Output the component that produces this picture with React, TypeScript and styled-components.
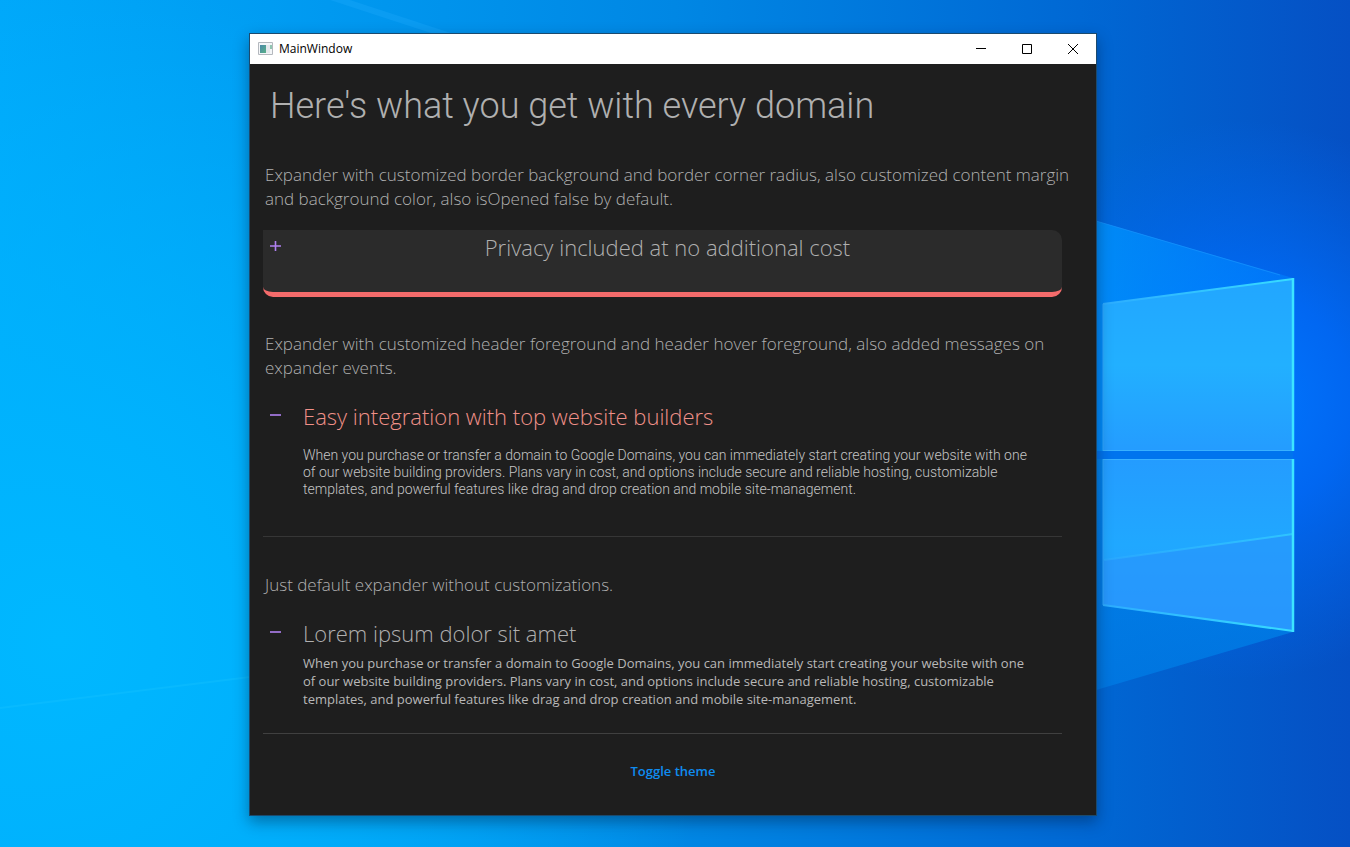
import React, { useId, useState } from "react";
import styled, { createGlobalStyle, css } from "styled-components";

const segoe = `"Open Sans", "Noto Sans", sans-serif`;
const roboto = `Roboto, "Liberation Sans", sans-serif`;

const GlobalStyle = createGlobalStyle`
  *, *::before, *::after { box-sizing: border-box; }
  html, body, #root { margin: 0; min-height: 100vh; }
  body { background: #0a84e8; font-family: ${segoe}; }
  button { font: inherit; color: inherit; background: none; border: 0; padding: 0; cursor: pointer; }
  h1, h2, p { margin: 0; font-weight: inherit; }
`;

const Desktop = styled.div`
  position: relative;
  display: flex;
  align-items: flex-start;
  min-height: 100vh;
  padding: 33px 253px 31px 249px;
  overflow: hidden;
`;

const WallpaperSvg = styled.svg`
  position: absolute;
  inset: 0;
  width: 100%;
  height: 100%;
`;

const AppWindow = styled.main<{ $light: boolean }>`
  position: relative;
  flex: 1;
  min-width: 0;
  display: flex;
  flex-direction: column;
  border: 1px solid #1b4a6e;
  box-shadow: 0 6px 14px rgba(0, 20, 50, 0.4);
  color: ${(p) => (p.$light ? "#444444" : "#b0b0b0")};
  background: ${(p) => (p.$light ? "#f4f4f4" : "#1e1e1e")};
`;

const TitleBar = styled.header`
  display: flex;
  align-items: center;
  height: 30px;
  padding-left: 8px;
  background: #ffffff;
  color: #000000;
`;

const AppIcon = styled.svg`
  width: 16px;
  height: 16px;
  margin-right: 5px;
`;

const WindowTitle = styled.span`
  flex: 1;
  font-size: 12px;
  line-height: 16px;
`;

const CaptionButton = styled.button`
  display: grid;
  place-items: center;
  width: 46px;
  height: 30px;
`;

const Content = styled.div`
  display: flex;
  flex-direction: column;
  padding: 18px 34px 0 13px;
`;

const Footer = styled.footer`
  display: flex;
  justify-content: center;
  padding: 27px 0 34px;
`;

const PageTitle = styled.h1`
  padding-left: 7px;
  font-family: ${roboto};
  font-size: 36px;
  font-weight: 300;
  line-height: 48px;
`;

const Section = styled.section<{ $gap: number }>`
  margin-top: ${(p) => p.$gap}px;
`;

const Description = styled.p`
  margin-right: -20px;
  padding-left: 2px;
  font-size: 17px;
  font-weight: 300;
  line-height: 24px;
`;

const Panel = styled.div<{ $variant: "card" | "roomy" | "plain" }>`
  margin-top: 19px;
  border-bottom: 1px solid #404040;
  ${(p) =>
    p.$variant === "roomy" &&
    css`
      border-bottom-color: #363636;
    `}
  ${(p) =>
    p.$variant === "card" &&
    css`
      padding-bottom: 28px;
      background: #2b2b2b;
      border-radius: 0 10px 10px 10px;
      border-bottom: 5px solid #f46b6b;
    `}
`;

const Header = styled.button<{ $accent: boolean; $centered: boolean }>`
  display: flex;
  align-items: flex-start;
  width: 100%;
  padding-right: ${(p) => (p.$centered ? 30 : 0)}px;
  font-size: 22px;
  font-weight: 300;
  line-height: 34px;
  text-align: ${(p) => (p.$centered ? "center" : "left")};
  color: ${(p) => (p.$accent ? "#f09088" : "inherit")};
`;

const ToggleMark = styled.svg`
  flex: none;
  width: 12px;
  height: 12px;
  margin: 10px 21px 0 7px;
`;

const HeaderText = styled.span`
  flex: 1;
`;

const Body = styled.p<{ $variant: "card" | "roomy" | "plain" }>`
  padding: 4px 24px 25px 40px;
  font-size: 13px;
  line-height: 18px;
  color: #b8b8b8;
  ${(p) =>
    p.$variant === "roomy" &&
    css`
      padding: 14px 24px 38px 40px;
      font-family: ${roboto};
      font-size: 14px;
      font-weight: 300;
      line-height: 17px;
      color: #c4c4c4;
    `}
`;

const ThemeButton = styled.button`
  font-size: 13px;
  font-weight: 600;
  line-height: 20px;
  color: #0f8cf0;
`;

function Wallpaper() {
  return (
    <WallpaperSvg viewBox="0 0 1350 847" preserveAspectRatio="none" aria-hidden="true">
      <defs>
        <linearGradient id="sky" x1="0" y1="0" x2="1" y2="0">
          <stop offset="0" stopColor="#00a8fa" />
          <stop offset="0.2" stopColor="#009cf2" />
          <stop offset="0.5" stopColor="#0087e4" />
          <stop offset="0.8" stopColor="#0068d4" />
          <stop offset="1" stopColor="#0550c4" />
        </linearGradient>
        <radialGradient id="cyan" gradientUnits="userSpaceOnUse" cx="60" cy="640" r="660">
          <stop offset="0" stopColor="#00b8ff" />
          <stop offset="0.35" stopColor="#00b4fe" stopOpacity="0.85" />
          <stop offset="1" stopColor="#00b8ff" stopOpacity="0" />
        </radialGradient>
        <radialGradient id="glow" gradientUnits="userSpaceOnUse" cx="1240" cy="400" r="280">
          <stop offset="0" stopColor="#0078ff" />
          <stop offset="0.4" stopColor="#006cfc" stopOpacity="0.8" />
          <stop offset="1" stopColor="#0068f0" stopOpacity="0" />
        </radialGradient>
        <linearGradient id="beam" x1="0" y1="0" x2="1" y2="0">
          <stop offset="0" stopColor="#0096ff" stopOpacity="0.75" />
          <stop offset="1" stopColor="#0080ff" stopOpacity="0.6" />
        </linearGradient>
        <linearGradient id="lowerBeam" x1="0" y1="0" x2="0" y2="1">
          <stop offset="0" stopColor="#0088ec" />
          <stop offset="1" stopColor="#007ae4" />
        </linearGradient>
        <linearGradient id="upperPane" x1="0" y1="0" x2="0" y2="1">
          <stop offset="0" stopColor="#22a6ff" />
          <stop offset="0.5" stopColor="#22b0ff" />
          <stop offset="1" stopColor="#249cff" />
        </linearGradient>
        <linearGradient id="lowerPane" x1="0" y1="0" x2="0" y2="1">
          <stop offset="0" stopColor="#249cff" />
          <stop offset="0.5" stopColor="#20a8ff" />
          <stop offset="1" stopColor="#2898ff" />
        </linearGradient>
        <linearGradient id="edge" gradientUnits="userSpaceOnUse" x1="1103" y1="0" x2="1293" y2="0">
          <stop offset="0" stopColor="#2cacff" />
          <stop offset="1" stopColor="#38dcff" />
        </linearGradient>
      </defs>
      <rect width="1350" height="847" fill="url(#sky)" />
      <rect width="1350" height="847" fill="url(#cyan)" />
      <rect width="1350" height="847" fill="url(#glow)" />
      <path d="M330 0 L440 36 L460 36 L350 0Z" fill="#28b0ff" opacity="0.25" />
      <path d="M0 708 L250 677" stroke="#18c4ff" strokeWidth="2" opacity="0.35" />
      <path d="M1096 221 L1293 278 V455 H1096Z" fill="url(#beam)" />
      <path d="M1096 455 H1293 V632 L1096 690Z" fill="url(#lowerBeam)" opacity="0.8" />
      <path d="M1096 451 H1293 V459 H1096Z" fill="#0074ee" />
      <path d="M1096 221 L1280 275" stroke="#1c98ff" strokeWidth="1" opacity="0.6" />
      <path d="M1103 304 L1293 279 V451 H1103Z" fill="url(#upperPane)" />
      <path d="M1103 459 H1293 V631 L1103 605Z" fill="url(#lowerPane)" />
      <path d="M1103 560 L1293 534 V631 L1103 605Z" fill="#2896fc" opacity="0.7" />
      <g fill="none" stroke="url(#edge)" strokeWidth="2">
        <path d="M1103 304 L1293 279" />
        <path d="M1103 605 L1293 631" />
        <path d="M1104 560 L1293 534" opacity="0.6" />
      </g>
      <path d="M1103 451 V304 M1103 459 V605" stroke="#30a8ff" />
      <path d="M1103 450.500 H1293 M1103 459.500 H1293" stroke="#38b0ff" />
      <path d="M1293 278 V451 M1293 459 V632" stroke="#3ce4ff" strokeWidth="2.500" />
    </WallpaperSvg>
  );
}

type ExpanderProps = {
  title: string;
  text: string;
  variant: "card" | "roomy" | "plain";
  defaultOpen?: boolean;
};

function Expander({ title, text, variant, defaultOpen = true }: ExpanderProps) {
  const [open, setOpen] = useState(defaultOpen);
  const id = useId();
  return (
    <Panel $variant={variant}>
      <Header
        type="button"
        $accent={variant === "roomy"}
        $centered={variant === "card"}
        aria-expanded={open}
        aria-controls={id}
        onClick={() => setOpen(!open)}
      >
        <ToggleMark viewBox="0 0 12 12" stroke="#b080f0" strokeWidth="1.600" aria-hidden="true">
          <path d={open ? "M0 6H11" : "M0 6H11M5.500 1V11"} />
        </ToggleMark>
        <HeaderText>{title}</HeaderText>
      </Header>
      <Body id={id} $variant={variant} hidden={!open}>
        {text}
      </Body>
    </Panel>
  );
}

const DOMAIN_TEXT =
  "When you purchase or transfer a domain to Google Domains, you can immediately start creating your website with one of our website building providers. Plans vary in cost, and options include secure and reliable hosting, customizable templates, and powerful features like drag and drop creation and mobile site-management.";

export default function App() {
  const [light, setLight] = useState(false);
  return (
    <Desktop>
      <GlobalStyle />
      <Wallpaper />
      <AppWindow $light={light}>
        <TitleBar>
          <AppIcon viewBox="0 0 16 16" aria-hidden="true">
            <defs>
              <linearGradient id="appIconFill" x1="0" y1="0" x2="1" y2="1">
                <stop offset="0" stopColor="#4a88a8" />
                <stop offset="1" stopColor="#58b088" />
              </linearGradient>
            </defs>
            <path d="M0.500 1.500H14.500V13.500H0.500Z" fill="#f4f6f8" stroke="#b4b8be" />
            <path d="M2 4H8V12H2Z" fill="url(#appIconFill)" />
            <path d="M8 4H12V12H8Z" fill="#e4e8ec" />
            <path d="M12 4H14V8H12Z" fill="#90c4b0" />
          </AppIcon>
          <WindowTitle>MainWindow</WindowTitle>
          <CaptionButton type="button" aria-label="Minimize">
            <svg width="10" height="10" viewBox="0 0 10 10" stroke="#000" fill="none">
              <path d="M0 4.500H10" />
            </svg>
          </CaptionButton>
          <CaptionButton type="button" aria-label="Maximize">
            <svg width="10" height="10" viewBox="0 0 10 10" stroke="#000" fill="none">
              <path d="M0.500 0.500H9.500V9.500H0.500Z" />
            </svg>
          </CaptionButton>
          <CaptionButton type="button" aria-label="Close">
            <svg width="10" height="10" viewBox="0 0 10 10" stroke="#000" fill="none">
              <path d="M0 0L10 10M10 0L0 10" />
            </svg>
          </CaptionButton>
        </TitleBar>
        <Content>
          <PageTitle>Here's what you get with every domain</PageTitle>
          <Section $gap={33}>
            <Description>
              Expander with customized border background and border corner radius, also customized content margin and
              background color, also isOpened false by default.
            </Description>
            <Expander variant="card" title="Privacy included at no additional cost" text={DOMAIN_TEXT} defaultOpen={false} />
          </Section>
          <Section $gap={35}>
            <Description>
              Expander with customized header foreground and header hover foreground, also added messages on expander
              events.
            </Description>
            <Expander variant="roomy" title="Easy integration with top website builders" text={DOMAIN_TEXT} />
          </Section>
          <Section $gap={36}>
            <Description>Just default expander without customizations.</Description>
            <Expander variant="plain" title="Lorem ipsum dolor sit amet" text={DOMAIN_TEXT} />
          </Section>
        </Content>
        <Footer>
          <ThemeButton type="button" onClick={() => setLight(!light)}>
            Toggle theme
          </ThemeButton>
        </Footer>
      </AppWindow>
    </Desktop>
  );
}
